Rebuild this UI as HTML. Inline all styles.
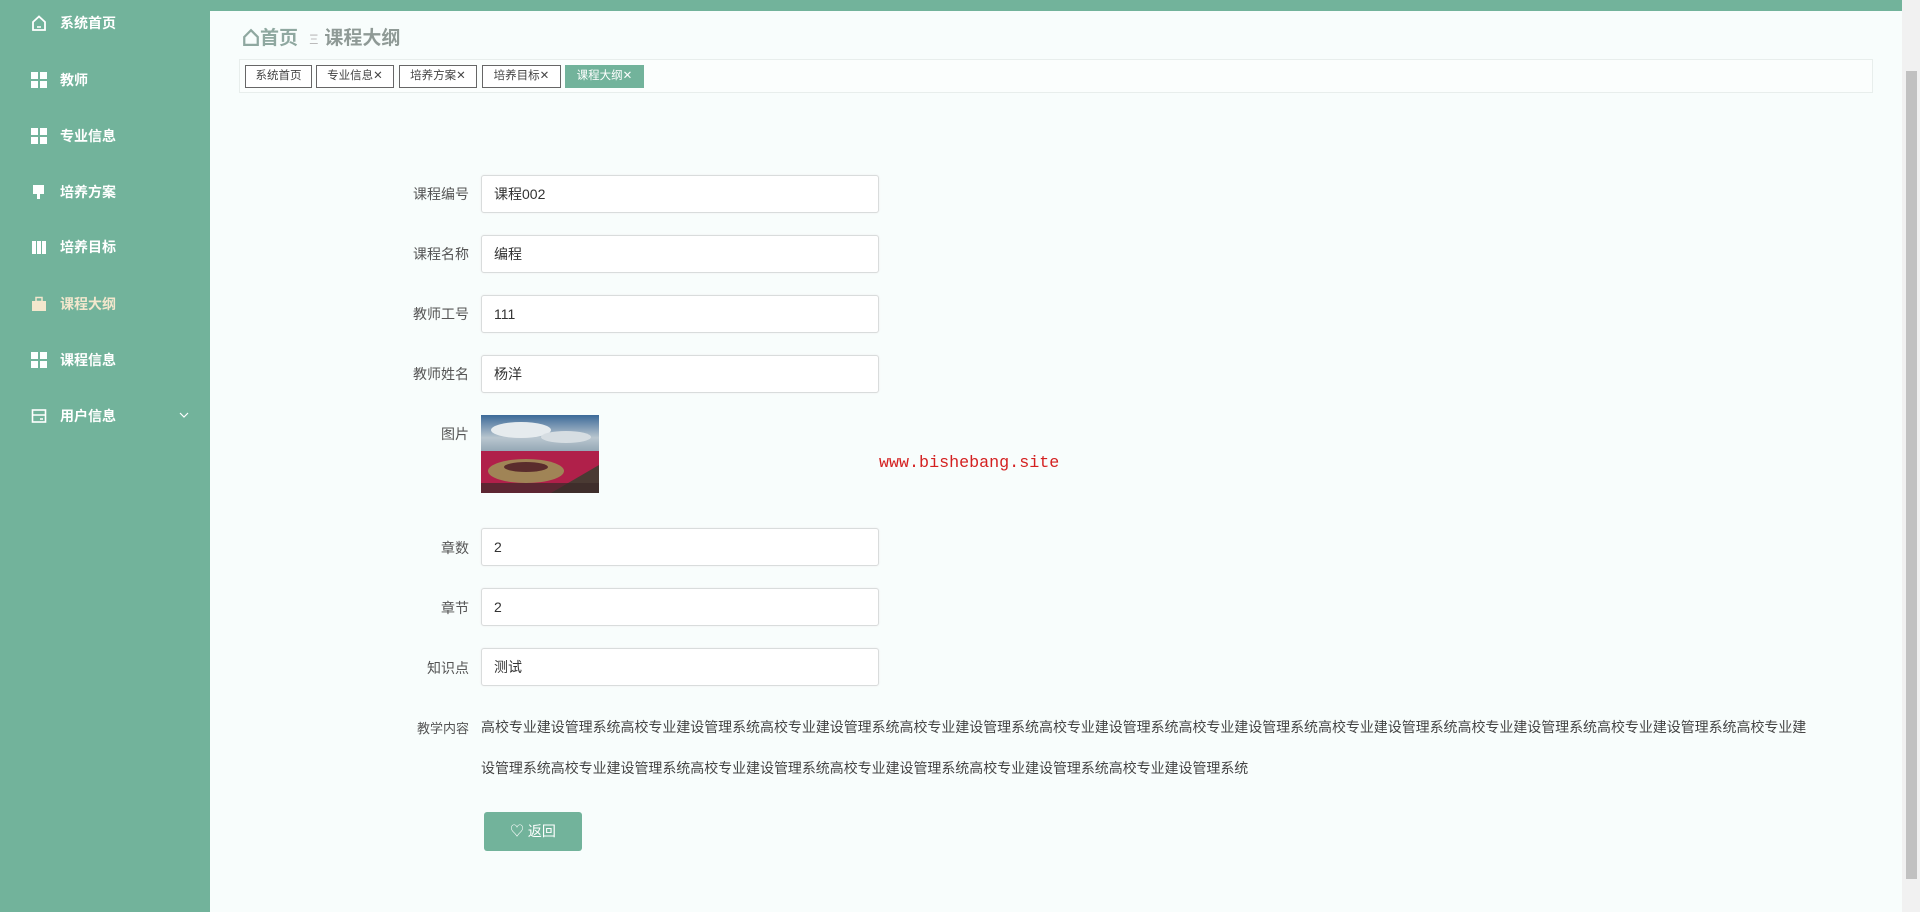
<!DOCTYPE html>
<html><head><meta charset="utf-8">
<style>
*{margin:0;padding:0;box-sizing:border-box}
body{width:1920px;height:912px;overflow:hidden;background:#f8fdfc;font-family:"Liberation Sans","Noto Sans CJK SC",sans-serif;position:relative}
.top{position:absolute;left:0;top:0;width:1920px;height:11px;background:#72b39b}
.side{position:absolute;left:0;top:0;width:210px;height:912px;background:#72b39b}
.item{position:absolute;left:0;width:210px;height:30px;color:#fff;font-size:14px;font-weight:bold;line-height:30px}
.item .ic{position:absolute;left:31px;top:7px;width:16px;height:16px}
.item span{position:absolute;left:60px}
.grid{display:grid;grid-template-columns:7px 7px;gap:2px}
.grid i{background:#fff;display:block;height:7px}
.crumb{position:absolute;left:242px;top:23px;font-size:19px;font-weight:bold;color:#8f9a96}
.tabs{position:absolute;left:239px;top:59px;width:1634px;height:34px;border:1px solid #e8eeec;background:#fbfefd}
.tab{position:absolute;top:5px;height:23px;border:1px solid #666;background:#fff;font-size:11.5px;color:#444;line-height:21px;text-align:center}
.lab{position:absolute;width:120px;left:349px;text-align:right;font-size:14px;color:#555}
.inp{position:absolute;left:481px;width:398px;height:38px;border:1px solid #d9dcdc;border-radius:3px;background:#fff;font-size:14px;color:#333;padding-left:12px;line-height:36px;box-shadow:0 0 2px #eee}
.content{position:absolute;left:481px;top:707px;width:1334px;font-size:14px;line-height:41px;color:#444;letter-spacing:-0.05px}
.btn{position:absolute;left:484px;top:812px;width:98px;height:39px;background:#72b39b;border-radius:3px;color:#fff;font-size:14px;line-height:39px;text-align:center}
.sb{position:absolute;right:0;top:0;width:18px;height:912px;background:#f1f1f1}
.sb div{position:absolute;left:4px;top:71px;width:11px;height:808px;background:#c1c1c1}
</style></head><body>
<div class="side">
 <div class="item" style="top:8px"><svg class="ic" viewBox="0 0 16 16"><path d="M2 7L8 1.5 14 7V15H2Z" fill="none" stroke="#fff" stroke-width="1.8"/><path d="M6 12h4" stroke="#fff" stroke-width="1.5"/></svg><span>系统首页</span></div>
 <div class="item" style="top:65px"><div class="ic grid"><i></i><i></i><i></i><i></i></div><span>教师</span></div>
 <div class="item" style="top:121px"><div class="ic grid"><i></i><i></i><i></i><i></i></div><span>专业信息</span></div>
 <div class="item" style="top:177px"><svg class="ic" viewBox="0 0 16 16"><rect x="2" y="1" width="11" height="9" fill="#fff"/><rect x="6" y="10" width="3" height="5" fill="#fff"/></svg><span>培养方案</span></div>
 <div class="item" style="top:232px"><svg class="ic" viewBox="0 0 16 16"><rect x="1" y="2" width="4" height="13" fill="#fff"/><rect x="6" y="2" width="4" height="13" fill="#fff"/><path d="M11 2h4v13h-4z" fill="#fff"/></svg><span>培养目标</span></div>
 <div class="item" style="top:289px;color:#f3e7cd"><svg class="ic" viewBox="0 0 16 16"><rect x="5" y="1.5" width="6" height="4" fill="none" stroke="#f3e7cd" stroke-width="1.5"/><rect x="1" y="5" width="14" height="10" fill="#f3e7cd"/></svg><span>课程大纲</span></div>
 <div class="item" style="top:345px"><div class="ic grid"><i></i><i></i><i></i><i></i></div><span>课程信息</span></div>
 <div class="item" style="top:401px"><svg class="ic" viewBox="0 0 16 16"><rect x="1.5" y="2" width="13" height="12" fill="none" stroke="#fff" stroke-width="1.6"/><path d="M1.5 7h13M9 11h3" stroke="#fff" stroke-width="1.6"/></svg><span>用户信息</span><svg style="position:absolute;left:179px;top:11px" width="10" height="7" viewBox="0 0 10 7"><path d="M1 1l4 4 4-4" fill="none" stroke="#fff" stroke-width="1.2"/></svg></div>
</div>
<div class="top" style="left:210px;width:1710px"></div>
<div class="crumb"><svg width="18" height="18" viewBox="0 0 16 16" style="vertical-align:-2px"><path d="M2 8L8 2 14 8V15H2Z" fill="none" stroke="#8fa8a0" stroke-width="2"/></svg><span style="color:#8fa8a0">首页</span> <span style="font-weight:normal;font-size:14px;color:#bbb;margin:0 6px">Ξ</span>课程大纲</div>
<div class="tabs">
 <div class="tab" style="left:5px;width:67px">系统首页</div>
 <div class="tab" style="left:76px;width:78px">专业信息✕</div>
 <div class="tab" style="left:159px;width:78px">培养方案✕</div>
 <div class="tab" style="left:242px;width:79px">培养目标✕</div>
 <div class="tab" style="left:325px;width:79px;background:#72b39b;border-color:#72b39b;color:#fff">课程大纲✕</div>
</div>
<div class="lab" style="top:184px">课程编号</div><div class="inp" style="top:175px">课程002</div>
<div class="lab" style="top:244px">课程名称</div><div class="inp" style="top:235px">编程</div>
<div class="lab" style="top:304px">教师工号</div><div class="inp" style="top:295px">111</div>
<div class="lab" style="top:364px">教师姓名</div><div class="inp" style="top:355px">杨洋</div>
<div class="lab" style="top:424px">图片</div>
<svg style="position:absolute;left:481px;top:415px" width="118" height="78" viewBox="0 0 118 78">
 <defs><linearGradient id="s" x1="0" y1="0" x2="0" y2="1"><stop offset="0" stop-color="#3c6a99"/><stop offset="0.6" stop-color="#b9c6cf"/><stop offset="1" stop-color="#8fa3b2"/></linearGradient></defs>
 <rect width="118" height="38" fill="url(#s)"/><ellipse cx="40" cy="15" rx="30" ry="8" fill="#e6ebee"/><ellipse cx="85" cy="22" rx="25" ry="6" fill="#d6dde2"/>
 <rect y="36" width="118" height="42" fill="#b0204a"/><ellipse cx="45" cy="56" rx="38" ry="12" fill="#a08456"/><ellipse cx="45" cy="52" rx="22" ry="5" fill="#5a2c2c"/><path d="M70 78L118 50V78Z" fill="#4a3a33"/><rect y="68" width="118" height="10" fill="#3a2a28" opacity=".7"/>
</svg>
<div style="position:absolute;left:879px;top:454px;font-family:'Liberation Mono',monospace;font-size:16.7px;color:#d42020">www.bishebang.site</div>
<div class="lab" style="top:538px">章数</div><div class="inp" style="top:528px">2</div>
<div class="lab" style="top:598px">章节</div><div class="inp" style="top:588px">2</div>
<div class="lab" style="top:658px">知识点</div><div class="inp" style="top:648px">测试</div>
<div class="lab" style="top:718px;font-size:13px">教学内容</div>
<div class="content">高校专业建设管理系统高校专业建设管理系统高校专业建设管理系统高校专业建设管理系统高校专业建设管理系统高校专业建设管理系统高校专业建设管理系统高校专业建设管理系统高校专业建设管理系统高校专业建设管理系统高校专业建设管理系统高校专业建设管理系统高校专业建设管理系统高校专业建设管理系统高校专业建设管理系统</div>
<div class="btn">♡ 返回</div>
<div class="sb"><div></div></div>
</body></html>
